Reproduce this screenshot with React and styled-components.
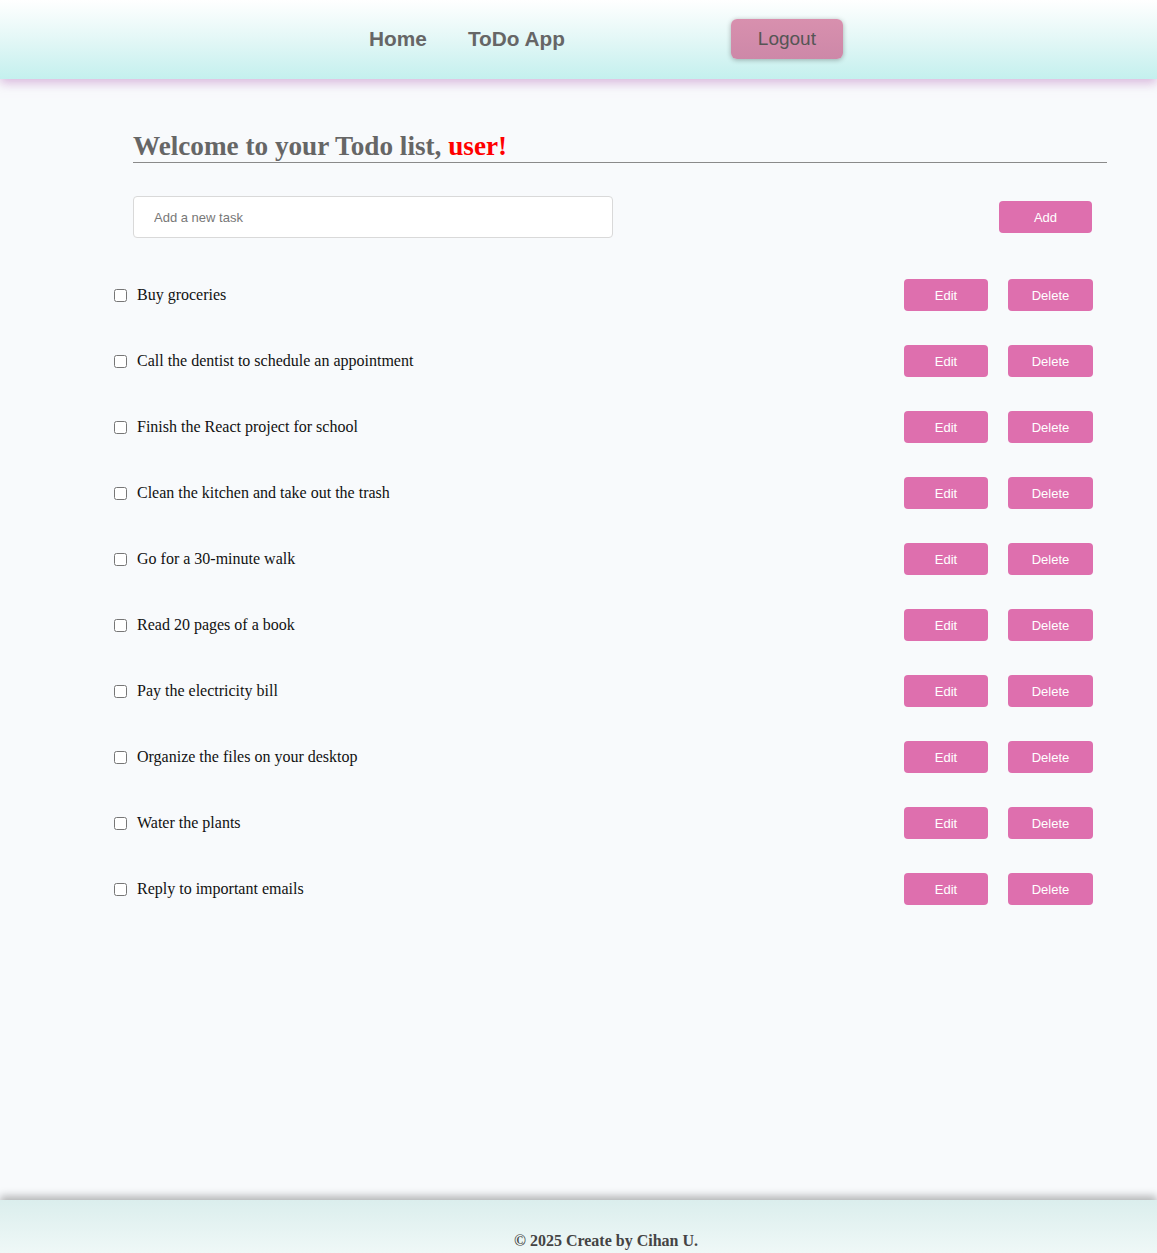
import React from "react";
import styled, { createGlobalStyle } from "styled-components";

const GlobalStyle = createGlobalStyle`
  html, body {
    margin: 0;
    padding: 0;
    background: #f8fafc;
    font-family: "Liberation Serif", "Times New Roman", serif;
  }
`;

const Page = styled.div`
  min-height: 100vh;
  display: flex;
  flex-direction: column;
`;

const Header = styled.header`
  height: 79px;
  display: flex;
  align-items: center;
  justify-content: center;
  padding-left: 55px;
  background: linear-gradient(to bottom, #ffffff 0%, #e6f8f7 45%, #c4f0ee 100%);
  box-shadow: 0 4px 10px rgba(205, 160, 210, 0.75);
  position: relative;
  z-index: 1;
`;

const NavLinks = styled.nav`
  display: flex;
  gap: 41px;
  margin-bottom: 2px;
`;

const NavLink = styled.a`
  font-family: "Liberation Sans", Arial, sans-serif;
  font-weight: bold;
  font-size: 20.8px;
  color: #666;
  text-decoration: none;
  cursor: pointer;
`;

const LogoutButton = styled.button`
  margin: 0 0 2px 166px;
  width: 112px;
  height: 40px;
  border: none;
  border-radius: 6px;
  background: linear-gradient(to bottom, #d890ae, #cd88a8);
  color: #555;
  font-family: "Liberation Sans", Arial, sans-serif;
  font-size: 19px;
  box-shadow: 0 1px 5px rgba(0, 0, 0, 0.3);
  cursor: pointer;
`;

const Main = styled.main`
  flex: 1;
  padding: 52px 0 40px;
`;

const Heading = styled.h1`
  margin: 0 0 0 133px;
  width: 974px;
  font-size: 27.2px;
  line-height: 31px;
  font-weight: bold;
  color: #666;
  border-bottom: 1px solid #8a8a8a;
`;

const UserName = styled.span`
  color: #ff0000;
`;

const AddRow = styled.div`
  margin: 33px 0 0 133px;
  width: 959px;
  display: flex;
  align-items: center;
  justify-content: space-between;
`;

const TaskInput = styled.input`
  width: 480px;
  height: 42px;
  box-sizing: border-box;
  border: 1px solid #d9d9d9;
  border-radius: 4px;
  background: #fff;
  padding: 0 20px;
  font-family: "Liberation Sans", Arial, sans-serif;
  font-size: 13px;
  color: #333;
  &::placeholder {
    color: #777;
  }
`;

const PinkButton = styled.button`
  width: ${(p) => p.$w}px;
  height: 32px;
  border: none;
  border-radius: 4px;
  background: #de6fae;
  color: #fff;
  font-family: "Liberation Sans", Arial, sans-serif;
  font-size: 13px;
  cursor: pointer;
`;

const List = styled.ul`
  list-style: none;
  margin: 24px 0 0 110px;
  padding: 0;
  width: 983px;
`;

const Row = styled.li`
  display: flex;
  align-items: center;
  height: 66px;
`;

const Check = styled.input`
  margin: 3px 3px 3px 4px;
  width: 13px;
  height: 13px;
`;

const TaskText = styled.span`
  flex: 1;
  margin-left: 7px;
  font-size: 16px;
  color: #111;
`;

const Actions = styled.div`
  display: flex;
  gap: 20px;
`;

const Footer = styled.footer`
  height: 53px;
  box-sizing: border-box;
  padding: 32px 0 0 55px;
  text-align: center;
  background: linear-gradient(to bottom, #dbeeed, #eff8f7);
  box-shadow: 0 -4px 8px rgba(0, 0, 0, 0.28);
  font-weight: bold;
  font-size: 16px;
  color: #444;
  overflow: hidden;
`;

const todos = [
  "Buy groceries",
  "Call the dentist to schedule an appointment",
  "Finish the React project for school",
  "Clean the kitchen and take out the trash",
  "Go for a 30-minute walk",
  "Read 20 pages of a book",
  "Pay the electricity bill",
  "Organize the files on your desktop",
  "Water the plants",
  "Reply to important emails",
];

const App = () => {
  return (
    <Page>
      <GlobalStyle />
      <Header>
        <NavLinks>
          <NavLink>Home</NavLink>
          <NavLink>ToDo App</NavLink>
        </NavLinks>
        <LogoutButton>Logout</LogoutButton>
      </Header>
      <Main>
        <Heading>
          Welcome to your Todo list, <UserName>user!</UserName>
        </Heading>
        <AddRow>
          <TaskInput placeholder="Add a new task" />
          <PinkButton $w={93}>Add</PinkButton>
        </AddRow>
        <List>
          {todos.map((t) => (
            <Row key={t}>
              <Check type="checkbox" />
              <TaskText>{t}</TaskText>
              <Actions>
                <PinkButton $w={84}>Edit</PinkButton>
                <PinkButton $w={85}>Delete</PinkButton>
              </Actions>
            </Row>
          ))}
        </List>
      </Main>
      <Footer>© 2025 Create by Cihan U.</Footer>
    </Page>
  );
};

export default App;
